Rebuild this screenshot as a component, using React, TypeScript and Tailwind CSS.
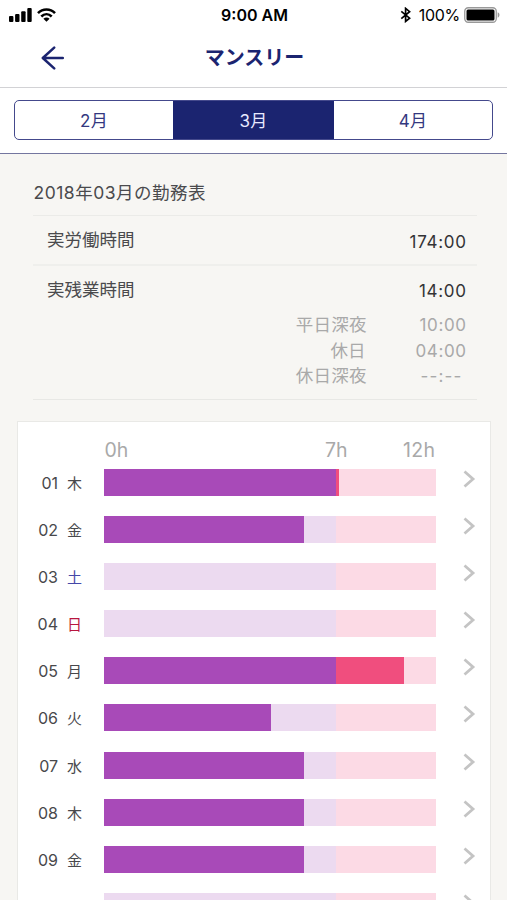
import React from "react";

type Day = {
  id: number;
  date?: string;
  weekday?: string;
  tone?: string;
  worked: number;
  overtime?: number;
};

const BAR_WIDTH = 332;
const REGULAR_WIDTH = 232;

const days: Day[] = [
  { id: 1, date: "01", weekday: "木", worked: 232, overtime: 3 },
  { id: 2, date: "02", weekday: "金", worked: 200 },
  { id: 3, date: "03", weekday: "土", tone: "text-[#4548a8]", worked: 0 },
  { id: 4, date: "04", weekday: "日", tone: "text-[#b8163f]", worked: 0 },
  { id: 5, date: "05", weekday: "月", worked: 232, overtime: 68 },
  { id: 6, date: "06", weekday: "火", worked: 167 },
  { id: 7, date: "07", weekday: "水", worked: 200 },
  { id: 8, date: "08", weekday: "木", worked: 200 },
  { id: 9, date: "09", weekday: "金", worked: 200 },
  { id: 10, worked: 0 },
];

function StatusBar() {
  return (
    <div className="flex h-[30px] items-center pl-[9px] pr-[7px] text-black">
      <div className="flex flex-1 items-center gap-[5px]">
        <svg width="23" height="14" viewBox="0 0 23 14" fill="currentColor">
          <rect x="0" y="8" width="4.4" height="6" rx="1" />
          <rect x="6.1" y="6" width="4.4" height="8" rx="1" />
          <rect x="12.2" y="3.2" width="4.4" height="10.8" rx="1" />
          <rect x="18.3" y="0" width="4.4" height="14" rx="1" />
        </svg>
        <svg width="19" height="14" viewBox="0 0 19 14" fill="none" stroke="currentColor" strokeWidth="2.6">
          <path d="M1 5.1C5.8 .3 13.2 .3 18 5.1" />
          <path d="M4.3 8.5C7.4 5.5 11.6 5.5 14.7 8.5" />
          <path d="M9.5 13.7 6.4 10.8C8.1 9.1 10.9 9.1 12.6 10.8Z" fill="currentColor" stroke="none" />
        </svg>
      </div>
      <div className="text-[16px] font-semibold leading-[30px]">9:00 AM</div>
      <div className="flex flex-1 items-center justify-end">
        <svg className="mr-[8px]" width="11" height="16" viewBox="0 0 11 16" fill="none" stroke="currentColor" strokeWidth="1.7">
          <path d="M1.3 4.3 9.6 11.2 5.6 14.4V1.4L9.6 4.7 1.3 11.6" />
        </svg>
        <span className="mr-[4px] text-[16px] leading-[30px] tracking-[-0.3px]">100%</span>
        <svg width="36" height="16" viewBox="0 0 36 16">
          <rect x=".75" y=".75" width="31.5" height="14.5" rx="3.5" fill="#fff" stroke="#999" strokeWidth="1.3" />
          <rect x="2.5" y="2.5" width="28" height="11" rx="1.5" fill="#000" />
          <path d="M33.7 5.3C36 6 36 10 33.7 10.7Z" fill="#999" />
        </svg>
      </div>
    </div>
  );
}

function Header() {
  return (
    <div className="flex h-[58px] items-start border-b-[1.5px] border-[#d2d2d5] pl-[41px] pr-[64px] text-[#1b2470]">
      <svg className="mt-[15.5px]" width="24" height="24" viewBox="0 0 24 24" fill="none" stroke="currentColor" strokeWidth="2.5" strokeLinecap="round" strokeLinejoin="round">
        <path d="M21.8 12H2M13.2 1.6 1.8 12 13.2 22.4" />
      </svg>
      <h1 className="flex-1 pl-px text-center text-[20px] font-bold leading-[57px]">マンスリー</h1>
    </div>
  );
}

function MonthTabs() {
  return (
    <div className="h-[66px] border-b border-[#74769f] px-[14px] pt-[12px]">
      <div className="flex h-[40px] overflow-hidden rounded-[5px] border-[1.5px] border-[#44498c] text-center text-[17px] leading-[40px] tracking-[0.2px] text-[#33387f]">
        <div className="w-[158px]">2月</div>
        <div className="w-[161px] bg-[#1b2470] text-[#e8eaff]">3月</div>
        <div className="flex-1">4月</div>
      </div>
    </div>
  );
}

function Summary() {
  return (
    <section className="ml-[33px] mr-[30px] h-[246px] border-b border-[#e8e8e5] pt-[16px] text-[17.5px] text-[#4a4a4d]">
      <h2 className="h-[45px] pl-[0.5px] leading-[46px] tracking-[0.5px]">2018年03月の勤務表</h2>
      <div className="flex h-[49px] justify-between border-t border-[#ebebe8] pl-[14px] pr-[11px] leading-[48px]">
        <span>実労働時間</span>
        <span className="-mr-[0.7px] pt-[2px] text-[17px] tracking-[0.7px] text-[#333336]">174:00</span>
      </div>
      <div className="flex h-[48px] justify-between border-t-2 border-[#efefec] pl-[14px] pr-[11px] leading-[47px]">
        <span>実残業時間</span>
        <span className="-mr-[0.7px] pt-[2px] text-[17px] tracking-[0.7px] text-[#333336]">14:00</span>
      </div>
      <div className="grid grid-cols-[1fr_100px] pr-[10.4px] text-right leading-[25.5px] text-[#a9a9a9]">
        <span className="tracking-[0.2px]">平日深夜</span>
        <span className="pt-px text-[17px] leading-[25px] tracking-[0.6px]">10:00</span>
        <span className="pr-[1px] leading-[25px]">休日</span>
        <span className="pt-px text-[17px] leading-[25px] tracking-[0.6px]">04:00</span>
        <span className="leading-[24px] tracking-[0.2px]">休日深夜</span>
        <span className="pr-[4px] text-[17px] leading-[24px] tracking-[1.2px]">--:--</span>
      </div>
    </section>
  );
}

function DayRow({ day }: { day: Day }) {
  return (
    <div className="flex h-[47.17px] shrink-0 items-start">
      <div className="flex w-[86px] pl-[19px] text-[16px] leading-[28px] text-[#48484b]">
        <span className="w-[21px] text-right">{day.date}</span>
        <span className={`ml-[9px] pt-px text-[15px] ${day.tone ?? ""}`}>{day.weekday}</span>
      </div>
      <div className="flex h-[27px] w-[332px]">
        <div className="bg-[#a84ab8]" style={{ width: day.worked }} />
        <div className="bg-[#ecdaf0]" style={{ width: REGULAR_WIDTH - day.worked }} />
        <div className="bg-[#f04e7e]" style={{ width: day.overtime ?? 0 }} />
        <div className="bg-[#fcdae5]" style={{ width: BAR_WIDTH - REGULAR_WIDTH - (day.overtime ?? 0) }} />
      </div>
      <svg className="ml-[27px] mt-px" width="13" height="18" viewBox="0 0 13 18" fill="none" stroke="#c4c4c4" strokeWidth="2.8">
        <path d="M1.5 1.5 10 9 1.5 16.5" />
      </svg>
    </div>
  );
}

function WorkChart() {
  return (
    <section className="ml-[17px] mr-[16px] mt-[21px] flex min-h-0 flex-1 flex-col overflow-hidden border border-b-0 border-[#e9e9e6] bg-white">
      <div className="flex h-[46.7px] shrink-0 pl-[86.5px] pt-[13px] text-[19.5px] leading-[30px] text-[#a9a9a9]">
        <span className="w-[220.5px]">0h</span>
        <span className="w-[78px]">7h</span>
        <span className="tracking-[0.3px]">12h</span>
      </div>
      {days.map((day) => (
        <DayRow key={day.id} day={day} />
      ))}
    </section>
  );
}

export default function App() {
  return (
    <main className="flex h-[900px] w-[507px] flex-col overflow-hidden bg-[#f7f6f3] font-['Inter','Noto_Sans_CJK_JP',sans-serif]">
      <div className="bg-white">
        <StatusBar />
        <Header />
        <MonthTabs />
      </div>
      <Summary />
      <WorkChart />
    </main>
  );
}
